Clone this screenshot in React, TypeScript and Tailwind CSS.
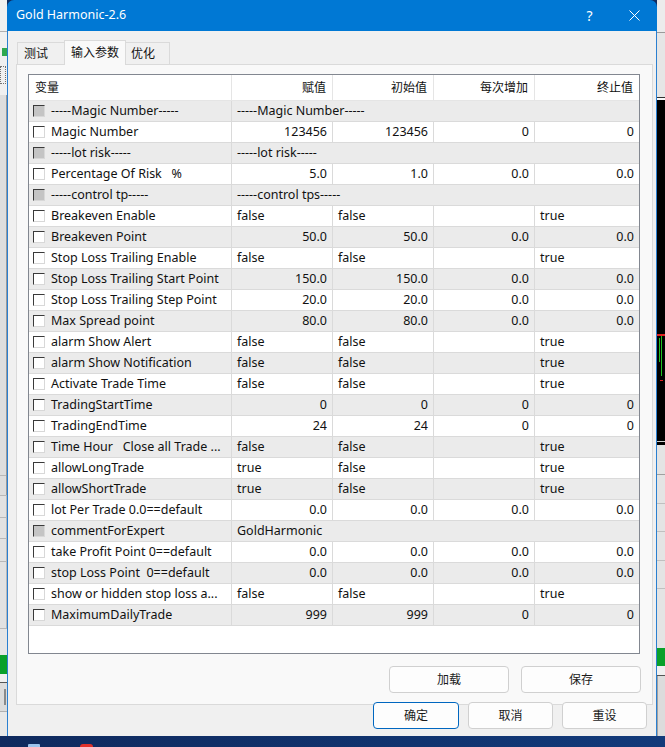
import React from 'react';

type Row = {
  name: string;
  group?: boolean;
  span?: string;
  vals?: string[];
  left?: boolean;
};

const rows: Row[] = [
  { name: '-----Magic Number-----', group: true, span: '-----Magic Number-----' },
  { name: 'Magic Number', vals: ['123456', '123456', '0', '0'] },
  { name: '-----lot risk-----', group: true, span: '-----lot risk-----' },
  { name: 'Percentage Of Risk   %', vals: ['5.0', '1.0', '0.0', '0.0'] },
  { name: '-----control tp-----', group: true, span: '-----control tps-----' },
  { name: 'Breakeven Enable', left: true, vals: ['false', 'false', '', 'true'] },
  { name: 'Breakeven Point', vals: ['50.0', '50.0', '0.0', '0.0'] },
  { name: 'Stop Loss Trailing Enable', left: true, vals: ['false', 'false', '', 'true'] },
  { name: 'Stop Loss Trailing Start Point', vals: ['150.0', '150.0', '0.0', '0.0'] },
  { name: 'Stop Loss Trailing Step Point', vals: ['20.0', '20.0', '0.0', '0.0'] },
  { name: 'Max Spread point', vals: ['80.0', '80.0', '0.0', '0.0'] },
  { name: 'alarm Show Alert', left: true, vals: ['false', 'false', '', 'true'] },
  { name: 'alarm Show Notification', left: true, vals: ['false', 'false', '', 'true'] },
  { name: 'Activate Trade Time', left: true, vals: ['false', 'false', '', 'true'] },
  { name: 'TradingStartTime', vals: ['0', '0', '0', '0'] },
  { name: 'TradingEndTime', vals: ['24', '24', '0', '0'] },
  { name: 'Time Hour   Close all Trade ...', left: true, vals: ['false', 'false', '', 'true'] },
  { name: 'allowLongTrade', left: true, vals: ['true', 'false', '', 'true'] },
  { name: 'allowShortTrade', left: true, vals: ['true', 'false', '', 'true'] },
  { name: 'lot Per Trade 0.0==default', vals: ['0.0', '0.0', '0.0', '0.0'] },
  { name: 'commentForExpert', group: true, span: 'GoldHarmonic' },
  { name: 'take Profit Point 0==default', vals: ['0.0', '0.0', '0.0', '0.0'] },
  { name: 'stop Loss Point  0==default', vals: ['0.0', '0.0', '0.0', '0.0'] },
  { name: 'show or hidden stop loss a...', left: true, vals: ['false', 'false', '', 'true'] },
  { name: 'MaximumDailyTrade', vals: ['999', '999', '0', '0'] },
];

const valCols = [
  'w-[101px] border-r border-[#dadada]',
  'w-[101px] border-r border-[#dadada]',
  'w-[101px] border-r border-[#dadada]',
  'w-[104px]',
];

function Check({ disabled }: { disabled?: boolean }) {
  return (
    <div
      className={`w-[12px] h-[12px] shrink-0 border border-t-[#3a3a3a] border-l-[#3a3a3a] border-r-[#d8d8d8] border-b-[#d8d8d8] ${
        disabled ? 'bg-[#c4c4c4]' : 'bg-white'
      }`}
    />
  );
}

function LeftStrip() {
  return (
    <div className="w-[7px] flex flex-col bg-[#e4e4e4]">
      <div className="h-[32px] bg-[#f0f0f0] border-b border-[#b0b0b0]" />
      <div className="h-[63px] bg-[#f0f0f0] flex flex-col">
        <div className="h-[16px]" />
        <div className="h-[8px] w-[5px] ml-[2px] bg-[#2fa84f]" />
        <div className="h-[10px]" />
        <div className="h-[18px] w-[6px] border border-dotted border-[#707070]" />
      </div>
      <div className="h-[400px] border-r border-[#9a9a9a] bg-[#dedede] flex flex-col">
        <div className="h-[380px]" />
        <div className="h-[20px] border-t border-[#b8b8b8]" />
      </div>
      <div className="h-[22px] border-r border-[#9a9a9a] border-t border-[#b8b8b8] bg-[#e2e2e2]" />
      <div className="h-[21px] border-r border-[#9a9a9a] border-t border-[#b8b8b8] bg-[#e2e2e2]" />
      <div className="h-[23px] border-r border-[#9a9a9a] border-t border-[#b8b8b8] bg-[#e2e2e2]" />
      <div className="h-[67px] border-r border-[#9a9a9a] border-t border-[#b8b8b8] bg-[#e2e2e2]" />
      <div className="h-[27px] border-t border-[#b8b8b8] bg-[#e6e6e6]" />
      <div className="h-[19px] bg-[#09a02a]" />
      <div className="h-[9px] bg-[#f0f0f0] border-b border-[#555]" />
      <div className="h-[28px] bg-[#dcdcdc] flex">
        <div className="ml-[4px] mt-[6px] w-[2px] h-[16px] bg-[#8a8a8a]" />
      </div>
      <div className="flex-1 bg-[#e8e8e8] border-t border-[#b0b0b0]" />
    </div>
  );
}

function RightStrip() {
  return (
    <div className="w-[8px] flex flex-col bg-[#e4e4e4]">
      <div className="h-[33px] bg-[#ececec] border-b border-[#9a9a9a]" />
      <div className="h-[64px] bg-[#e6e6e6]" />
      <div className="h-[3px] bg-[#f8f8f8] border-t border-[#303030]" />
      <div className="h-[345px] bg-black flex flex-col">
        <div className="h-[232px]" />
        <svg width="8" height="60" viewBox="0 0 8 60">
          <rect x="0" y="2" width="8" height="2" fill="#e02020" />
          <line x1="2.5" y1="6" x2="2.5" y2="30" stroke="#20c020" strokeWidth="1" />
          <line x1="4.5" y1="4" x2="4.5" y2="44" stroke="#20c020" strokeWidth="1" />
          <rect x="3" y="48" width="3" height="1" fill="#e02020" />
        </svg>
        <div className="flex-1" />
        <div className="h-[4px] border-t border-[#d0d0d0]" />
      </div>
      <div className="h-[203px] bg-[#e4e4e4] flex flex-col">
        <div className="h-[30px] border-b border-[#a0a0a0]" />
        <div className="h-[29px] border-b border-[#c0c0c0]" />
        <div className="h-[28px] border-b border-[#c0c0c0]" />
        <div className="h-[29px] border-b border-[#c0c0c0]" />
        <div className="h-[28px] border-b border-[#c0c0c0]" />
        <div className="flex-1" />
      </div>
      <div className="h-[18px] bg-[#09a02a]" />
      <div className="h-[10px] bg-[#f0f0f0] border-b border-[#555]" />
      <div className="flex-1 bg-[#dcdcdc] border-l border-[#a0a0a0]" />
    </div>
  );
}

function Btn({ label, w, primary }: { label: string; w: string; primary?: boolean }) {
  return (
    <button
      className={`${w} h-[27px] rounded-[4px] border bg-[#fdfdfd] text-[12px] text-[#1a1a1a] flex items-center justify-center ${
        primary ? 'border-[#0067c0]' : 'border-[#d0d0d0]'
      }`}
    >
      {label}
    </button>
  );
}

function ParamTable() {
  return (
    <div className="w-[612px] h-[580px] border border-[#828790] bg-white flex flex-col text-[12.5px] text-[#111]">
      <div className="flex h-[26px] border-b border-[#e5e5e5] shrink-0 text-[12px]">
        <div className="w-[203px] border-r border-[#e5e5e5] flex items-center pl-[6px]">变量</div>
        <div className="w-[101px] border-r border-[#e5e5e5] flex items-center justify-end pr-[6px]">赋值</div>
        <div className="w-[101px] border-r border-[#e5e5e5] flex items-center justify-end pr-[6px]">初始值</div>
        <div className="w-[101px] border-r border-[#e5e5e5] flex items-center justify-end pr-[6px]">每次增加</div>
        <div className="w-[104px] flex items-center justify-end pr-[6px]">终止值</div>
      </div>
      {rows.map((r, i) => (
        <div
          key={i}
          className={`flex h-[21px] shrink-0 border-b border-[#dadada] ${i % 2 === 0 ? 'bg-[#ebebeb]' : 'bg-white'}`}
        >
          <div className="w-[203px] flex items-center border-r border-[#dadada] pl-[4px] overflow-hidden">
            <Check disabled={r.group} />
            <span className="ml-[6px] whitespace-pre">{r.name}</span>
          </div>
          {r.span ? (
            <div className="flex-1 flex items-center pl-[5px] whitespace-pre">{r.span}</div>
          ) : (
            r.vals!.map((v, j) => (
              <div
                key={j}
                className={`${valCols[j]} flex items-center ${r.left ? 'pl-[5px]' : 'justify-end pr-[5px]'}`}
              >
                {v}
              </div>
            ))
          )}
        </div>
      ))}
    </div>
  );
}

export default function App() {
  return (
    <div className="w-[665px] h-[747px] overflow-hidden flex flex-col bg-[#0f2c60] font-['Noto_Sans','Noto_Sans_CJK_SC',sans-serif]">
      <div className="flex h-[736px] shrink-0">
        <LeftStrip />

        {/* dialog */}
        <div className="w-[650px] flex flex-col">
          <div className="h-[31px] shrink-0 bg-[#0078d4] rounded-t-[7px] flex items-center pl-[9px] text-white">
            <span className="text-[12.5px]">Gold Harmonic-2.6</span>
            <div className="ml-auto flex h-full">
              <div className="w-[46px] flex items-center justify-center text-[14px] pl-[3px]">?</div>
              <div className="w-[46px] flex items-center justify-center">
                <svg width="11" height="11" viewBox="0 0 11 11">
                  <path d="M0.5 0.5 L10.5 10.5 M10.5 0.5 L0.5 10.5" stroke="white" strokeWidth="1" />
                </svg>
              </div>
            </div>
          </div>

          <div className="flex-1 bg-[#f0f0f0] border-x border-[#2a7fd0] flex flex-col">
            {/* tabs */}
            <div className="h-[33px] pl-[9px] flex items-end text-[12px] text-[#111] shrink-0">
              <div className="w-[47px] h-[22px] border-t border-l border-[#dadada] bg-[#f0f0f0] flex items-center pl-[6px]">
                测试
              </div>
              <div className="w-[62px] h-[25px] -mb-px relative z-10 border-t border-x border-[#dadada] bg-[#f9f9f9] flex items-center pl-[6px]">
                输入参数
              </div>
              <div className="w-[44px] h-[22px] border-t border-r border-[#dadada] bg-[#f0f0f0] flex items-center pl-[5px]">
                优化
              </div>
            </div>

            {/* panel */}
            <div className="ml-[8px] w-[637px] h-[641px] shrink-0 border border-[#dadada] bg-[#f9f9f9] flex flex-col pt-[9px] pl-[11px]">
              <ParamTable />
              <div className="mt-[12px] flex justify-end gap-[12px] pr-[11px]">
                <Btn label="加载" w="w-[120px]" />
                <Btn label="保存" w="w-[120px]" />
              </div>
            </div>

            <div className="-mt-[3px] relative z-10 flex justify-end gap-[9px] pr-[9px]">
              <Btn label="确定" w="w-[86px]" primary />
              <Btn label="取消" w="w-[85px]" />
              <Btn label="重设" w="w-[85px]" />
            </div>
          </div>
        </div>

        <RightStrip />
      </div>

      {/* taskbar */}
      <div className="flex-1 bg-gradient-to-r from-[#0f2a5e] to-[#123a7a] flex items-start">
        <div className="ml-[28px] mt-[8px] w-[12px] h-[3px] bg-[#9cc4ee] rounded-t-[1px]" />
        <div className="ml-[40px] mt-[8px] w-[13px] h-[3px] bg-[#e0302a] rounded-t-[3px]" />
      </div>
    </div>
  );
}
